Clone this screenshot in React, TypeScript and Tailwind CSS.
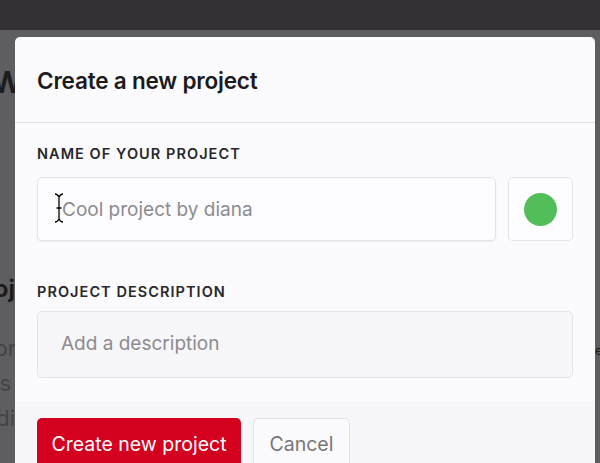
import React from "react";

function IBeam() {
  return (
    <svg width="12" height="32" viewBox="0 0 12 32" className="absolute left-[15px] top-[14px]">
      <path d="M2 2 C4 2 5 3 6 5 C7 3 8 2 10 2 M6 5 L6 27 M2 30 C4 30 5 29 6 27 C7 29 8 30 10 30 M3.5 16 L8.5 16" stroke="#ffffff" strokeWidth="3" fill="none" strokeLinecap="round" />
      <path d="M2 2 C4 2 5 3 6 5 C7 3 8 2 10 2 M6 5 L6 27 M2 30 C4 30 5 29 6 27 C7 29 8 30 10 30 M3.5 16 L8.5 16" stroke="#000000" strokeWidth="1.3" fill="none" />
    </svg>
  );
}

function Peek({ children, className }: { children: React.ReactNode; className: string }) {
  return (
    <div className={"w-[15px] overflow-hidden flex justify-end whitespace-nowrap " + className}>
      <span className="shrink-0">{children}</span>
    </div>
  );
}

export default function App() {
  const font = { fontFamily: "Inter, 'Noto Sans', sans-serif" };
  return (
    <div className="relative w-[600px] h-[463px] overflow-hidden bg-[#5e5d5f]" style={font}>
      <div className="h-[30px] bg-[#323034]" />
      {/* background page behind the overlay */}
      <div className="flex justify-between">
        <div className="flex flex-col text-[#1c1b1d]">
          <Peek className="mt-[36px] text-[30px] font-bold leading-[32px]">
            <span className="mr-[-8px]">W</span>
          </Peek>
          <Peek className="mt-[176px] text-[24px] font-bold leading-[30px]">proj</Peek>
          <Peek className="mt-[27px] text-[22px] leading-[35px] text-[#444345]">
            <span className="mr-[-1px]">pr</span>
          </Peek>
          <Peek className="text-[22px] leading-[35px] text-[#444345]">
            <span className="mr-[4px]">s</span>
          </Peek>
          <Peek className="text-[22px] leading-[35px] text-[#444345]">
            <span className="mr-[0px]">di</span>
          </Peek>
        </div>
        <div className="w-[5px] overflow-hidden flex flex-col">
          <span className="mt-[314px] text-[12px] leading-[14px] text-[#1c1b1d] whitespace-nowrap">e</span>
        </div>
      </div>

      {/* modal */}
      <div className="absolute left-[15px] top-[37px] w-[580px] h-[460px] rounded-[5px] bg-[#fbfafc] flex flex-col overflow-hidden">
        <div className="h-[86px] shrink-0 border-b border-[#e1e0e3] px-[22px] flex items-center">
          <h1 className="text-[22.5px] font-semibold text-[#1b1a1d] tracking-[-0.2px] pt-[2px]">Create a new project</h1>
        </div>
        <div className="px-[22px] pt-[21px] pb-[23px] flex flex-col">
          <label className="text-[14.5px] font-semibold tracking-[1.05px] text-[#28272a] leading-[20px]">NAME OF YOUR PROJECT</label>
          <div className="mt-[13px] flex gap-[12px]">
            <div className="relative w-[459px] h-[64px] rounded-[5px] border border-[#e3e2e5] bg-[#fdfcfe] shadow-[0_1px_2px_rgba(0,0,0,0.06)] flex items-center pl-[24px]">
              <span className="text-[19px] text-[#8c8b8e] pt-[3px]">Cool project by diana</span>
              <IBeam />
            </div>
            <div className="w-[65px] h-[64px] rounded-[5px] border border-[#e3e2e5] bg-[#fdfcfe] flex items-center justify-center">
              <div className="w-[33px] h-[33px] rounded-full bg-[#52be5a]" />
            </div>
          </div>
          <label className="mt-[41px] text-[14.5px] font-semibold tracking-[1.05px] text-[#28272a] leading-[20px]">PROJECT DESCRIPTION</label>
          <div className="mt-[9px] w-[536px] h-[67px] rounded-[5px] border border-[#e3e2e5] bg-[#f7f6f8] flex items-center pl-[23px]">
            <span className="text-[19px] text-[#8c8b8e] pb-[1px]">Add a description</span>
          </div>
        </div>
        <div className="flex-1 bg-[#f7f6f8] px-[22px] pt-[17px] flex gap-[12px]">
          <button className="h-[56px] w-[204px] rounded-[5px] bg-[#d4001f] text-white text-[19.5px] flex items-center justify-center pb-[2px]">Create new project</button>
          <button className="h-[56px] w-[97px] rounded-[5px] border border-[#e1e0e3] bg-[#fbfafc] text-[#77767a] text-[19.5px] flex items-center justify-center pb-[2px]">Cancel</button>
        </div>
      </div>
    </div>
  );
}
